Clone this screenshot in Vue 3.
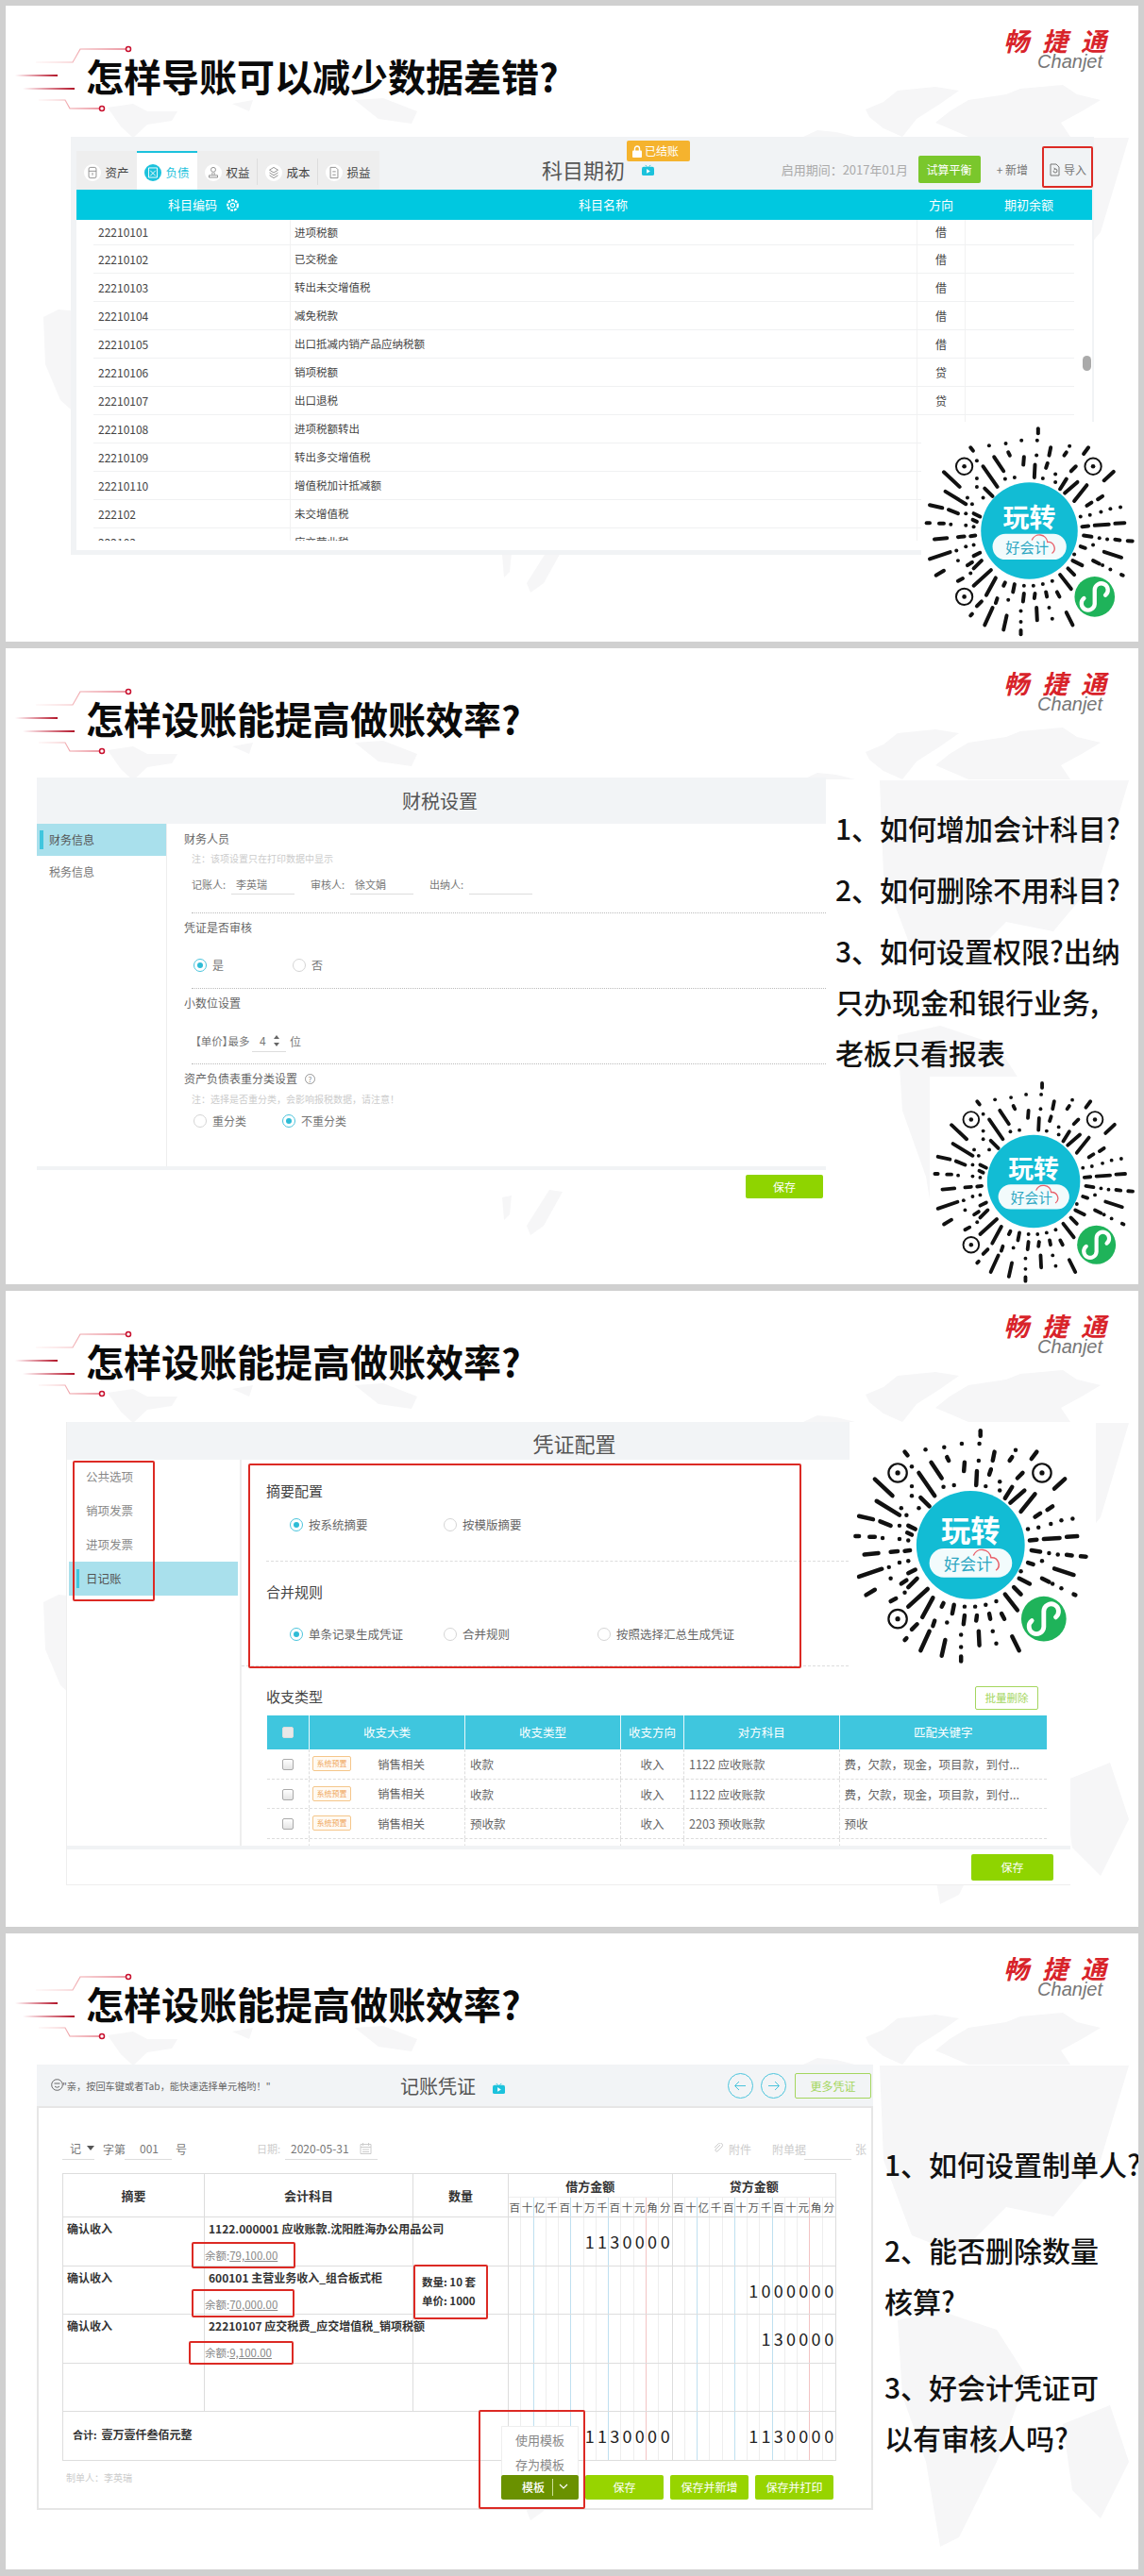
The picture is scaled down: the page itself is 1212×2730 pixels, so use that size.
<script setup>
const mapBlobs = [
  'M911 110 L930 102 L945 90 L985 86 L1010 90 L990 104 L965 120 L950 139 L930 130 L915 118 Z',
  'M985 124 L1000 112 L1020 100 L1060 94 L1075 88 L1120 84 L1135 94 L1160 100 L1140 112 L1118 124 L1128 139 L1020 139 Z',
  'M845 139 L860 132 L880 134 L900 139 Z',
  'M108 108 L135 104 L150 112 L182 112 L176 122 L150 126 L135 140 L122 128 Z',
  'M370 100 L400 98 L436 112 L430 125 L395 120 Z',
  'M240 104 L262 100 L258 112 Z',
  'M40 330 L56 322 L76 324 L78 436 L58 418 L42 380 Z',
  'M926 140 L1190 140 L1160 240 L1110 300 L1060 290 L1010 340 L960 320 L930 240 Z',
  'M945 410 L990 400 L1050 420 L1082 470 L1050 560 L1010 640 L990 650 L975 560 L950 490 Z',
  'M1120 520 L1170 500 L1190 560 L1160 620 L1130 590 Z',
  'M526 582 L536 580 L534 600 L528 606 Z',
  'M552 612 L576 574 L590 576 L570 612 L556 622 Z'
]

const finders = [[185, 190], [595, 190], [185, 605]]
const dashes = [
  [420,70,420,85],[417,107,417,107],[367,107,367,107],[317,117,317,117],[264,124,264,124],[205,130,213,140],[520,125,520,125],[460,130,455,155],[510,145,503,155],[580,130,565,150],
  [375,160,373,185],[325,145,330,155],[280,160,310,205],[245,190,290,255],[225,172,225,172],[120,208,170,255],[225,228,225,228],[415,155,415,155],[410,185,408,225],[450,180,445,195],
  [475,215,475,215],[345,225,345,225],[315,230,315,230],[435,228,435,228],[475,240,475,240],[540,190,525,205],[510,230,490,262],[660,207,630,235],[545,240,505,275],[575,250,535,300],
  [125,270,190,310],[250,260,275,285],[225,255,225,255],[195,290,195,290],[245,290,245,290],[75,313,115,322],[135,328,165,340],[210,310,210,310],[215,340,235,350],[190,340,190,340],
  [625,285,610,295],[590,305,575,315],[682,320,682,320],[650,325,650,325],[620,335,620,335],[585,345,585,345],[555,350,555,350],[65,370,75,370],[105,372,120,372],[142,375,142,375],
  [190,378,190,378],[215,382,215,382],[212,360,225,366],[560,382,580,380],[600,378,645,375],[665,372,695,370],[90,422,130,418],[165,415,185,413],[205,412,220,410],[565,410,590,414],
  [615,418,615,418],[640,422,640,422],[665,423,680,425],[705,427,720,428],[75,485,140,463],[160,458,160,458],[215,440,215,440],[190,445,190,445],[555,445,570,450],[630,462,685,480],
  [595,440,595,440],[535,470,535,470],[95,537,120,522],[165,490,165,490],[215,475,235,465],[195,505,210,495],[240,490,215,515],[530,490,560,505],[595,490,615,500],[650,518,650,518],
  [625,505,625,505],[685,535,690,537],[165,555,180,547],[205,530,205,530],[270,520,215,570],[515,515,535,535],[490,535,525,580],[285,545,255,600],[315,560,310,570],[345,565,340,590],
  [375,570,375,570],[405,570,405,570],[435,565,435,565],[465,555,465,555],[375,595,372,620],[410,595,408,610],[445,590,448,605],[480,590,488,605],[290,610,285,625],[325,615,325,615],
  [240,620,225,635],[210,660,205,665],[275,640,250,695],[320,665,310,710],[365,650,365,650],[365,685,365,685],[365,712,365,725],[415,640,417,680],[455,640,455,640],[465,675,465,675],[510,655,530,695]
]

const tabs = [
  { name: '资产', glyph: 'M4.500 4.500a1.500 1.500 0 0 1 1.500-1.500h4a1.500 1.500 0 0 1 1.500 1.500v7a1.500 1.500 0 0 1-1.500 1.500h-4a1.500 1.500 0 0 1-1.500-1.500z M4.500 6.500h7 M8 8v2.500' },
  { name: '负债', glyph: 'M4 3.500h8v9H4z M5.500 6l5 5 M10.500 6l-5 5', active: true },
  { name: '权益', glyph: 'M8 3a2.200 2.200 0 1 1 0 4.400a2.200 2.200 0 1 1 0-4.400 M7 8v2 M9 8v2 M4 10.500h8v2H4z' },
  { name: '成本', glyph: 'M8 3l4 2.500l-4 2.500l-4-2.500z M4 8l4 2.500l4-2.500 M4 10.500l4 2.500l4-2.500' },
  { name: '损益', glyph: 'M4.500 3h5l2 2v8h-7z M6.500 7h3 M6.500 10h3' }
]

const subjects = [
  ['22210101', '进项税额', '借'],
  ['22210102', '已交税金', '借'],
  ['22210103', '转出未交增值税', '借'],
  ['22210104', '减免税款', '借'],
  ['22210105', '出口抵减内销产品应纳税额', '借'],
  ['22210106', '销项税额', '贷'],
  ['22210107', '出口退税', '贷'],
  ['22210108', '进项税额转出', '贷'],
  ['22210109', '转出多交增值税', '贷'],
  ['22210110', '增值税加计抵减额', '贷'],
  ['222102', '未交增值税', '贷'],
  ['222103', '应交营业税', '贷']
]

const keywords = '费\uFF0C欠款\uFF0C现金\uFF0C项目款\uFF0C到付...'
const incomeRows = [
  ['销售相关', '收款', '收入', '1122 应收账款', keywords],
  ['销售相关', '收款', '收入', '1122 应收账款', keywords],
  ['销售相关', '预收款', '收入', '2203 预收账款', '预收'],
  ['', '', '', '', '']
]

const units = '百十亿千百十万千百十元角分'.split('')

function cells(num) {
  return num.padStart(13, ' ').split('')
}

function lineClass(i) {
  if (i === 1 || i === 4 || i === 7) return 'blue'
  if (i === 10) return 'red'
  return ''
}

const vouchers = [
  { sum: '确认收入', acct: '1122.000001 应收账款.沈阳胜海办公用品公司', bal: '79,100.00', debit: '1130000', credit: '' },
  { sum: '确认收入', acct: '600101 主营业务收入_组合板式柜', bal: '70,000.00', debit: '', credit: '1000000', qty: true },
  { sum: '确认收入', acct: '22210107 应交税费_应交增值税_销项税额', bal: '9,100.00', debit: '', credit: '130000' },
  { sum: '', acct: '', bal: '', debit: '', credit: '' }
]
</script>

<template>
  <div class="page">
    <!-- 第一页 -->
    <section class="slide">
      <svg class="map" viewBox="0 0 1200 674"><path v-for="(d, i) in mapBlobs" :key="i" :d="d" /></svg>
      <svg class="deco" viewBox="0 0 140 80">
        <defs>
          <linearGradient id="fade1"><stop offset="0" stop-color="#c8102e" stop-opacity="0" /><stop offset="1" stop-color="#b01428" /></linearGradient>
          <linearGradient id="fade2"><stop offset="0" stop-color="#e88" stop-opacity="0.1" /><stop offset="1" stop-color="#d9364a" /></linearGradient>
        </defs>
        <path d="M32 20H71L79 6H127" fill="none" stroke="url(#fade2)" stroke-width="1.2" />
        <circle cx="130" cy="6" r="2.5" fill="#fff" stroke="#c8102e" stroke-width="1.5" />
        <rect x="10" y="33" width="45" height="2" fill="url(#fade1)" />
        <rect x="18" y="47" width="55" height="2" fill="url(#fade1)" />
        <path d="M35 60H63L68 69H99" fill="none" stroke="url(#fade2)" stroke-width="1.2" />
        <circle cx="102" cy="69" r="2.5" fill="#fff" stroke="#c8102e" stroke-width="1.5" />
      </svg>
      <header class="head">
        <h1>怎样导账可以减少数据差错?</h1>
        <div class="logo"><b>畅捷通</b><i>Chanjet</i></div>
      </header>

      <div class="panel p1">
        <div class="p1-top">
          <div class="tabs">
            <div v-for="t in tabs" :key="t.name" class="tab" :class="{ on: t.active }">
              <svg class="tab-ico" viewBox="0 0 16 16"><circle cx="8" cy="8" r="8" /><path :d="t.glyph" /></svg>
              {{ t.name }}
            </div>
          </div>
          <div class="p1-title">
            科目期初
            <span class="closed">
              <svg width="10" height="13" viewBox="0 0 10 13"><path d="M2.500 6V3.500a2.500 2.500 0 0 1 5 0V6" fill="none" stroke="#fff" stroke-width="1.400" /><rect y="5.500" width="10" height="7.500" rx="1" fill="#fff" /></svg>
              已结账
            </span>
            <svg class="tv" viewBox="0 0 14 12"><rect y="2" width="14" height="10" rx="2" /><path d="M4 0l2 2M10 0l-2 2" stroke="#1cc2dc" /><path d="M5.500 4.500l4 2.500l-4 2.500z" fill="#fff" /></svg>
          </div>
          <div class="p1-right">
            <span class="period">启用期间&#xFF1A;2017年01月</span>
            <span class="try">试算平衡</span>
            <span class="lnk add">+ 新增</span>
            <span class="lnk imp">
              <svg width="11" height="14" viewBox="0 0 11 14"><path d="M1 1h6l3 3v9H1z M4 8a2 2 0 1 0 2-2 M6 6l-1.500-1M6 6l-1.500 1" fill="none" stroke="#777" /></svg>
              导入
            </span>
          </div>
          <div class="redbox p1-red"></div>
        </div>
        <div class="p1-thead">
          <div class="code-h">科目编码
            <svg width="15" height="15" viewBox="0 0 14 14"><circle cx="7" cy="7" r="5" fill="none" stroke="#fff" stroke-width="2" stroke-dasharray="2.600 1" /><circle cx="7" cy="7" r="2" fill="none" stroke="#fff" /></svg>
          </div>
          <div>科目名称</div>
          <div>方向</div>
          <div>期初余额</div>
        </div>
        <div class="p1-body">
          <div class="p1-rows">
            <div v-for="r in subjects" :key="r[0]" class="p1-row">
              <div>{{ r[0] }}</div>
              <div class="nm">{{ r[1] }}</div>
              <div class="dir">{{ r[2] }}</div>
              <div></div>
            </div>
          </div>
          <div class="thumb"></div>
        </div>
      </div>

      <svg class="qr qr1" viewBox="48 48 700 700">
        <rect x="48" y="48" width="700" height="700" fill="#fff" />
        <g fill="none" stroke="#111">
          <line v-for="(q, i) in dashes" :key="i" :x1="q[0]" :y1="q[1]" :x2="q[2]" :y2="q[3]" stroke-width="12" stroke-linecap="round" />
          <g v-for="(f, i) in finders" :key="i">
            <circle :cx="f[0]" :cy="f[1]" r="26" stroke-width="6" />
            <circle :cx="f[0]" :cy="f[1]" r="7" fill="#111" stroke="none" />
          </g>
        </g>
        <circle cx="392" cy="395" r="154" fill="#12bcd4" />
        <text x="392" y="385" text-anchor="middle" class="qr-big">玩转</text>
        <rect x="275" y="405" width="235" height="82" rx="41" fill="#f2fbfc" />
        <text x="385" y="466" text-anchor="middle" class="qr-small">好会计</text>
        <path d="M400 425a26 26 0 0 1 50 6a20 20 0 0 1 14 36" fill="none" stroke="#e8606a" stroke-width="4" />
        <circle cx="600" cy="605" r="64" fill="#1fb35a" />
        <path d="M566 610A21 21 0 1 0 600 628L600 583A21 21 0 1 1 634 600" fill="none" stroke="#fff" stroke-width="13" stroke-linecap="round" />
      </svg>
    </section>

    <!-- 第二页 -->
    <section class="slide">
      <svg class="map" viewBox="0 0 1200 674"><path v-for="(d, i) in mapBlobs" :key="i" :d="d" /></svg>
      <svg class="deco" viewBox="0 0 140 80">
        <path d="M32 20H71L79 6H127" fill="none" stroke="url(#fade2)" stroke-width="1.2" />
        <circle cx="130" cy="6" r="2.5" fill="#fff" stroke="#c8102e" stroke-width="1.5" />
        <rect x="10" y="33" width="45" height="2" fill="url(#fade1)" />
        <rect x="18" y="47" width="55" height="2" fill="url(#fade1)" />
        <path d="M35 60H63L68 69H99" fill="none" stroke="url(#fade2)" stroke-width="1.2" />
        <circle cx="102" cy="69" r="2.5" fill="#fff" stroke="#c8102e" stroke-width="1.5" />
      </svg>
      <header class="head">
        <h1>怎样设账能提高做账效率?</h1>
        <div class="logo"><b>畅捷通</b><i>Chanjet</i></div>
      </header>

      <div class="body b2">
        <div class="panel p2">
          <div class="ptitle p2-head">财税设置</div>
          <div class="p2-main">
            <div class="p2-side">
              <div class="side-item on"><span class="bar"></span>财务信息</div>
              <div class="side-item">税务信息</div>
            </div>
            <div class="p2-form">
              <div class="sec s-a">
                <div class="st">财务人员</div>
                <div class="note">注&#xFF1A;该项设置只在打印数据中显示</div>
                <div class="people">
                  <span class="pl">记账人:</span><span class="pv">李英瑞</span>
                  <span class="pl">审核人:</span><span class="pv">徐文娟</span>
                  <span class="pl">出纳人:</span><span class="pv"></span>
                </div>
              </div>
              <div class="sec s-b">
                <div class="st">凭证是否审核</div>
                <div class="opts">
                  <label class="opt w105"><i class="radio on"></i>是</label>
                  <label class="opt"><i class="radio"></i>否</label>
                </div>
              </div>
              <div class="sec s-b">
                <div class="st">小数位设置</div>
                <div class="digits-row">
                  <span class="price">【单价】最多</span>
                  <span class="num">4<span class="spin"><em></em><em></em></span></span>
                  <span>位</span>
                </div>
              </div>
              <div class="sec s-c">
                <div class="st">资产负债表重分类设置 <span class="help">?</span></div>
                <div class="note">注&#xFF1A;选择是否重分类&#xFF0C;会影响报税数据&#xFF0C;请注意&#xFF01;</div>
                <div class="opts o2">
                  <label class="opt w94"><i class="radio"></i>重分类</label>
                  <label class="opt"><i class="radio on"></i>不重分类</label>
                </div>
              </div>
            </div>
          </div>
          <div class="foot-bar"></div>
          <div class="p2-foot"><span class="save s2">保存</span></div>
        </div>
        <div class="side s2-text">
          <p>1、如何增加会计科目?</p>
          <p>2、如何删除不用科目?</p>
          <p>3、如何设置权限?出纳<br />只办现金和银行业务,<br />老板只看报表</p>
        </div>
      </div>

      <svg class="qr qr2" viewBox="48 48 700 700">
        <rect x="48" y="48" width="700" height="700" fill="#fff" />
        <g fill="none" stroke="#111">
          <line v-for="(q, i) in dashes" :key="i" :x1="q[0]" :y1="q[1]" :x2="q[2]" :y2="q[3]" stroke-width="12" stroke-linecap="round" />
          <g v-for="(f, i) in finders" :key="i">
            <circle :cx="f[0]" :cy="f[1]" r="26" stroke-width="6" />
            <circle :cx="f[0]" :cy="f[1]" r="7" fill="#111" stroke="none" />
          </g>
        </g>
        <circle cx="392" cy="395" r="154" fill="#12bcd4" />
        <text x="392" y="385" text-anchor="middle" class="qr-big">玩转</text>
        <rect x="275" y="405" width="235" height="82" rx="41" fill="#f2fbfc" />
        <text x="385" y="466" text-anchor="middle" class="qr-small">好会计</text>
        <path d="M400 425a26 26 0 0 1 50 6a20 20 0 0 1 14 36" fill="none" stroke="#e8606a" stroke-width="4" />
        <circle cx="600" cy="605" r="64" fill="#1fb35a" />
        <path d="M566 610A21 21 0 1 0 600 628L600 583A21 21 0 1 1 634 600" fill="none" stroke="#fff" stroke-width="13" stroke-linecap="round" />
      </svg>
    </section>

    <!-- 第三页 -->
    <section class="slide">
      <svg class="map" viewBox="0 0 1200 674"><path v-for="(d, i) in mapBlobs" :key="i" :d="d" /></svg>
      <svg class="deco" viewBox="0 0 140 80">
        <path d="M32 20H71L79 6H127" fill="none" stroke="url(#fade2)" stroke-width="1.2" />
        <circle cx="130" cy="6" r="2.5" fill="#fff" stroke="#c8102e" stroke-width="1.5" />
        <rect x="10" y="33" width="45" height="2" fill="url(#fade1)" />
        <rect x="18" y="47" width="55" height="2" fill="url(#fade1)" />
        <path d="M35 60H63L68 69H99" fill="none" stroke="url(#fade2)" stroke-width="1.2" />
        <circle cx="102" cy="69" r="2.5" fill="#fff" stroke="#c8102e" stroke-width="1.5" />
      </svg>
      <header class="head">
        <h1>怎样设账能提高做账效率?</h1>
        <div class="logo"><b>畅捷通</b><i>Chanjet</i></div>
      </header>

      <div class="panel p3">
        <div class="ptitle p3-head">凭证配置</div>
        <div class="p3-main">
          <div class="p3-side">
            <div class="side3">公共选项</div>
            <div class="side3">销项发票</div>
            <div class="side3">进项发票</div>
            <div class="side3 on"><span class="bar"></span>日记账</div>
            <div class="redbox p3-red1"></div>
          </div>
          <div class="p3-form">
            <div class="redbox p3-red2"></div>
            <div class="sec3 a">
              <div class="st3">摘要配置</div>
              <div class="opts3">
                <label class="opt w163"><i class="radio on"></i>按系统摘要</label>
                <label class="opt w163"><i class="radio"></i>按模版摘要</label>
              </div>
            </div>
            <div class="sec3 b">
              <div class="st3">合并规则</div>
              <div class="opts3">
                <label class="opt w163"><i class="radio on"></i>单条记录生成凭证</label>
                <label class="opt w163"><i class="radio"></i>合并规则</label>
                <label class="opt"><i class="radio"></i>按照选择汇总生成凭证</label>
              </div>
            </div>
            <div class="type-head">
              <div class="st3">收支类型</div>
              <span class="batch">批量删除</span>
            </div>
            <div class="itable">
              <div class="irow ihead">
                <div><i class="check dark"></i></div>
                <div>收支大类</div>
                <div>收支类型</div>
                <div>收支方向</div>
                <div>对方科目</div>
                <div>匹配关键字</div>
              </div>
              <div v-for="(r, i) in incomeRows" :key="i" class="irow">
                <div class="c"><i class="check"></i></div>
                <div class="cat"><span class="preset">系统预置</span>{{ r[0] }}</div>
                <div>{{ r[1] }}</div>
                <div class="c">{{ r[2] }}</div>
                <div>{{ r[3] }}</div>
                <div>{{ r[4] }}</div>
              </div>
            </div>
          </div>
        </div>
        <div class="foot-bar"></div>
        <div class="p3-foot"><span class="save s3">保存</span></div>
      </div>

      <svg class="qr qr3" viewBox="48 48 700 700">
        <rect x="48" y="48" width="700" height="700" fill="#fff" />
        <g fill="none" stroke="#111">
          <line v-for="(q, i) in dashes" :key="i" :x1="q[0]" :y1="q[1]" :x2="q[2]" :y2="q[3]" stroke-width="12" stroke-linecap="round" />
          <g v-for="(f, i) in finders" :key="i">
            <circle :cx="f[0]" :cy="f[1]" r="26" stroke-width="6" />
            <circle :cx="f[0]" :cy="f[1]" r="7" fill="#111" stroke="none" />
          </g>
        </g>
        <circle cx="392" cy="395" r="154" fill="#12bcd4" />
        <text x="392" y="385" text-anchor="middle" class="qr-big">玩转</text>
        <rect x="275" y="405" width="235" height="82" rx="41" fill="#f2fbfc" />
        <text x="385" y="466" text-anchor="middle" class="qr-small">好会计</text>
        <path d="M400 425a26 26 0 0 1 50 6a20 20 0 0 1 14 36" fill="none" stroke="#e8606a" stroke-width="4" />
        <circle cx="600" cy="605" r="64" fill="#1fb35a" />
        <path d="M566 610A21 21 0 1 0 600 628L600 583A21 21 0 1 1 634 600" fill="none" stroke="#fff" stroke-width="13" stroke-linecap="round" />
      </svg>
    </section>

    <!-- 第四页 -->
    <section class="slide">
      <svg class="map" viewBox="0 0 1200 674"><path v-for="(d, i) in mapBlobs" :key="i" :d="d" /></svg>
      <svg class="deco" viewBox="0 0 140 80">
        <path d="M32 20H71L79 6H127" fill="none" stroke="url(#fade2)" stroke-width="1.2" />
        <circle cx="130" cy="6" r="2.5" fill="#fff" stroke="#c8102e" stroke-width="1.5" />
        <rect x="10" y="33" width="45" height="2" fill="url(#fade1)" />
        <rect x="18" y="47" width="55" height="2" fill="url(#fade1)" />
        <path d="M35 60H63L68 69H99" fill="none" stroke="url(#fade2)" stroke-width="1.2" />
        <circle cx="102" cy="69" r="2.5" fill="#fff" stroke="#c8102e" stroke-width="1.5" />
      </svg>
      <header class="head">
        <h1>怎样设账能提高做账效率?</h1>
        <div class="logo"><b>畅捷通</b><i>Chanjet</i></div>
      </header>

      <div class="body b4">
        <div class="panel p4">
          <div class="p4-head">
            <svg class="smile" width="13" height="13" viewBox="0 0 13 13"><circle cx="6.500" cy="6.500" r="5.800" fill="none" stroke="#666" /><path d="M3.500 5h6M4 8c1.500 1.500 3.500 1.500 5 0" fill="none" stroke="#666" /></svg>
            <span class="tip">"亲&#xFF0C;按回车键或者Tab&#xFF0C;能快速选择单元格哟&#xFF01;"</span>
            <span class="p4-title">记账凭证</span>
            <svg class="tv t4" viewBox="0 0 14 12"><rect y="2" width="14" height="10" rx="2" /><path d="M4 0l2 2M10 0l-2 2" stroke="#1cc2dc" /><path d="M5.500 4.500l4 2.500l-4 2.500z" fill="#fff" /></svg>
            <span class="nav"><svg viewBox="0 0 27 27"><circle cx="13.500" cy="13.500" r="13" /><path d="M19 13.500H8M12 9l-4.500 4.500L12 18" /></svg></span>
            <span class="nav n2"><svg viewBox="0 0 27 27"><circle cx="13.500" cy="13.500" r="13" /><path d="M8 13.500H19M15 9l4.500 4.500L15 18" /></svg></span>
            <span class="more">更多凭证</span>
          </div>
          <div class="p4-body">
            <div class="vform">
              <span class="ul u1">记<i class="caret"></i></span>
              <span class="lbl l1">字第</span>
              <span class="ul u2">001</span>
              <span class="lbl l2">号</span>
              <span class="lbl l3">日期:</span>
              <span class="ul u3">2020-05-31
                <svg width="13" height="13" viewBox="0 0 13 13"><path d="M1 2.500h11v10H1z M1 5.500h11 M3.500 1v3M9.500 1v3 M3 8h7M3 10.500h7" fill="none" stroke="#ccc" /></svg>
              </span>
              <span class="vright">
                <svg width="12" height="12" viewBox="0 0 12 12"><path d="M8 2L3 7a1.500 1.500 0 0 0 2 2l5-5a2.500 2.500 0 0 0-3.500-3.500L2 5" fill="none" stroke="#ccc" /></svg>
                <span class="lbl l4">附件</span>
                <span class="lbl l5">附单据</span>
                <span class="ul u4"></span>
                <span class="lbl l6">张</span>
              </span>
            </div>
            <div class="vtable">
              <div class="vrow vhead">
                <div class="vc">摘要</div>
                <div class="vc">会计科目</div>
                <div class="vc">数量</div>
                <div class="amh">
                  <div class="amt-t">借方金额</div>
                  <div class="amt-u"><span v-for="(u, i) in units" :key="i" :class="lineClass(i)">{{ u }}</span></div>
                </div>
                <div class="amh">
                  <div class="amt-t">贷方金额</div>
                  <div class="amt-u"><span v-for="(u, i) in units" :key="i" :class="lineClass(i)">{{ u }}</span></div>
                </div>
              </div>
              <div v-for="(v, n) in vouchers" :key="n" class="vrow">
                <div class="vt">{{ v.sum }}</div>
                <div class="vt acct">
                  <div>{{ v.acct }}</div>
                  <div v-if="v.bal" class="bal">余额:<u>{{ v.bal }}</u></div>
                </div>
                <div class="vt qty">
                  <template v-if="v.qty">
                    <div>数量: 10 套</div>
                    <div>单价: 1000</div>
                  </template>
                </div>
                <div class="amt"><span v-for="(c, i) in cells(v.debit)" :key="i" :class="lineClass(i)">{{ c }}</span></div>
                <div class="amt"><span v-for="(c, i) in cells(v.credit)" :key="i" :class="lineClass(i)">{{ c }}</span></div>
              </div>
              <div class="vrow vsum">
                <div class="total"><span class="tl">合计:</span>壹万壹仟叁佰元整</div>
                <div class="amt"><span v-for="(c, i) in cells('1130000')" :key="i" :class="lineClass(i)">{{ c }}</span></div>
                <div class="amt"><span v-for="(c, i) in cells('1130000')" :key="i" :class="lineClass(i)">{{ c }}</span></div>
              </div>
              <div class="redbox r1"></div>
              <div class="redbox r2"></div>
              <div class="redbox r3"></div>
              <div class="redbox r4"></div>
              <div class="redbox r5"></div>
            </div>
            <div class="vfoot">
              <span class="maker">制单人&#xFF1A;李英瑞</span>
              <div class="tpl">
                <div class="tpl-menu"><div>使用模板</div><div>存为模板</div></div>
                <span class="tpl-name">模板</span>
                <svg width="10" height="7" viewBox="0 0 10 7"><path d="M1 1l4 4l4-4" fill="none" stroke="#fff" stroke-width="1.200" /></svg>
              </div>
              <span class="gbtn">保存</span>
              <span class="gbtn">保存并新增</span>
              <span class="gbtn">保存并打印</span>
            </div>
          </div>
        </div>
        <div class="side s4-text">
          <p>1、如何设置制单人?</p>
          <p>2、能否删除数量<br />核算?</p>
          <p>3、好会计凭证可<br />以有审核人吗?</p>
        </div>
      </div>
    </section>
  </div>
</template>

<style>
html, body {
  margin: 0;
  background: #d0d0d0;
}
</style>

<style scoped>
* {
  box-sizing: border-box;
}

.page {
  width: 1212px;
  padding: 6px 6px 0;
  font-family: "Noto Sans CJK SC", "Noto Sans", sans-serif;
  color: #555;
  font-size: 12px;
}

.slide {
  position: relative;
  height: 674px;
  margin-bottom: 7px;
  background: #fff;
  overflow: hidden;
}

.map {
  position: absolute;
  left: 0;
  top: 0;
  width: 1200px;
  height: 674px;
}

.map path {
  fill: #f6f6f7;
}

.deco {
  position: absolute;
  left: 0;
  top: 40px;
  width: 140px;
  height: 80px;
}

.head {
  position: relative;
  display: flex;
  justify-content: space-between;
  height: 139px;
  padding: 46px 32px 0 85px;
}

.head h1 {
  margin: 0;
  font-size: 40px;
  line-height: 56px;
  font-weight: 700;
  color: #0a0a0a;
  white-space: nowrap;
}

.logo {
  display: flex;
  flex-direction: column;
  align-items: flex-end;
  margin-top: -22px;
}

.logo b {
  font-size: 27px;
  line-height: 26px;
  letter-spacing: 14px;
  margin-right: -12px;
  color: #d8232a;
  font-style: italic;
}

.logo i {
  font-family: "Liberation Sans", sans-serif;
  font-size: 20px;
  line-height: 16px;
  color: #777;
  margin: 1px 6px 0 0;
}

.panel {
  position: relative;
}

.body {
  position: relative;
  display: flex;
  align-items: flex-start;
}

.side {
  flex: none;
  color: #111;
  font-size: 30px;
  line-height: 54px;
  font-weight: 500;
  white-space: nowrap;
}

.side p {
  margin: 0 0 11px;
}

.redbox {
  position: absolute;
  border: 2px solid #dc2a24;
  border-radius: 2px;
  pointer-events: none;
}

.ptitle {
  text-align: center;
  color: #555;
  background: #f2f4f6;
}

.tv {
  width: 13px;
  height: 13px;
  fill: #1cc2dc;
}

.qr {
  position: absolute;
}

.qr1 {
  left: 970px;
  top: 441px;
  width: 233px;
  height: 233px;
}

.qr2 {
  left: 979px;
  top: 454px;
  width: 224px;
  height: 224px;
}

.qr3 {
  left: 894px;
  top: 140px;
  width: 261px;
  height: 261px;
}

.qr-big {
  font-size: 84px;
  font-weight: 700;
  fill: #fff;
}

.qr-small {
  font-size: 46px;
  fill: #2fa7c2;
}

/* 第一页 */
.p1 {
  width: 1084px;
  height: 443px;
  margin-left: 69px;
  padding: 0 2px 5px 6px;
  background: #f1f3f5;
}

.p1-top {
  position: relative;
  display: flex;
  height: 56px;
}

.tabs {
  display: flex;
  width: 321px;
  height: 41px;
  margin-top: 15px;
  background: #eee;
}

.tab {
  position: relative;
  display: flex;
  align-items: center;
  justify-content: center;
  gap: 4px;
  width: 64px;
  padding-top: 2px;
  font-size: 12.500px;
  color: #444;
  border-top: 2px solid transparent;
}

.tab.on {
  background: #fff;
  color: #1cc2dc;
  border-top-color: #1cc2dc;
}

.tab:nth-child(3)::after,
.tab:nth-child(4)::after {
  content: "";
  position: absolute;
  right: 0;
  top: 6px;
  height: 28px;
  border-right: 1px solid #ddd;
}

.tab-ico {
  flex: none;
  width: 18px;
  height: 18px;
  fill: none;
}

.tab-ico circle {
  fill: #fff;
}

.tab-ico path {
  stroke: #888;
  stroke-width: 0.800;
}

.tab.on .tab-ico circle {
  fill: #1cc2dc;
}

.tab.on .tab-ico path {
  stroke: #fff;
}

.p1-title {
  position: relative;
  margin: 17px 0 0 172px;
  width: 100px;
  font-size: 22px;
  line-height: 34px;
  color: #555;
  white-space: nowrap;
}

.p1-title .tv {
  position: absolute;
  left: 106px;
  top: 12px;
}

.closed {
  position: absolute;
  left: 90px;
  top: -13px;
  display: flex;
  align-items: center;
  gap: 3px;
  width: 67px;
  height: 22px;
  padding-left: 6px;
  background: #f5b32e;
  border-radius: 2px;
  color: #fff;
  font-size: 12px;
  line-height: 22px;
}

.p1-right {
  display: flex;
  align-items: center;
  margin-left: auto;
  height: 29px;
  margin-top: 20px;
  padding-right: 6px;
  white-space: nowrap;
}

.period {
  width: 145px;
  font-size: 13px;
  color: #aaa;
}

.try {
  width: 66px;
  height: 29px;
  line-height: 29px;
  text-align: center;
  background: #7ac72c;
  color: #fff;
  border-radius: 2px;
}

.lnk {
  display: flex;
  align-items: center;
  gap: 4px;
  color: #777;
}

.add {
  margin-left: 17px;
}

.imp {
  margin-left: 23px;
}

.p1-red {
  right: -1px;
  top: 10px;
  width: 54px;
  height: 44px;
}

.p1-thead {
  display: grid;
  grid-template-columns: 226px 664px 52px 134px;
  height: 32px;
  line-height: 32px;
  background: #00c8e0;
  color: #fff;
  font-size: 13px;
  text-align: center;
}

.code-h {
  display: flex;
  align-items: center;
  justify-content: center;
  gap: 9px;
  padding-left: 44px;
}

.p1-body {
  position: relative;
  height: 350px;
  background: #fff;
}

.p1-rows {
  height: 340px;
  overflow: hidden;
  padding: 0 19px 0 18px;
  margin-top: 0;
}

.p1-row {
  display: grid;
  grid-template-columns: 208px 664px 52px 115px;
  height: 30px;
  border-bottom: 1px solid #f0f1f2;
  color: #444;
  line-height: 29px;
}

.p1-row:first-child {
  height: 27px;
  line-height: 26px;
}

.p1-row > div {
  padding-left: 5px;
}

.p1-row .nm {
  padding-left: 4px;
  border-left: 1px solid #f2f2f2;
  font-size: 11.500px;
}

.p1-row .dir {
  padding: 0;
  text-align: center;
  border-left: 1px solid #f2f2f2;
  border-right: 1px solid #f2f2f2;
}

.thumb {
  position: absolute;
  left: 1066px;
  top: 144px;
  width: 9px;
  height: 16px;
  border-radius: 5px;
  background: #aaa;
}

/* 第二页 */
.b2 {
  margin-top: -2px;
  padding-left: 33px;
}

.p2 {
  width: 836px;
  height: 446px;
  flex: none;
}

.p2-head {
  height: 49px;
  line-height: 50px;
  font-size: 20px;
  padding-left: 18px;
}

.p2-main {
  display: flex;
  height: 363px;
  background: #fff;
}

.p2-side {
  width: 138px;
  flex: none;
  border-right: 1px solid #eee;
}

.side-item {
  position: relative;
  height: 34px;
  line-height: 34px;
  padding-left: 13px;
  color: #777;
  font-size: 12px;
}

.side-item.on {
  background: #a9e0ec;
  color: #555;
}

.bar {
  position: absolute;
  left: 3px;
  top: 7px;
  width: 4px;
  height: 20px;
  background: #3fc6de;
}

.p2-form {
  flex: 1;
  padding-left: 18px;
}

.sec {
  position: relative;
  padding-top: 6px;
}

.sec::after {
  content: "";
  position: absolute;
  left: 8px;
  right: 0;
  bottom: 0;
  border-top: 1px dotted #bbb;
}

.s-a {
  height: 95px;
}

.s-b {
  height: 80px;
  padding-top: 5px;
}

.s-c {
  height: 90px;
  padding-top: 5px;
}

.s-c::after {
  display: none;
}

.st {
  display: flex;
  align-items: center;
  gap: 6px;
  height: 20px;
  line-height: 20px;
  color: #666;
}

.help {
  width: 11px;
  height: 11px;
  margin-left: 2px;
  border: 1px solid #999;
  border-radius: 50%;
  font-size: 8px;
  line-height: 9px;
  text-align: center;
  color: #888;
}

.note {
  height: 20px;
  line-height: 20px;
  margin: 1px 0 0 8px;
  font-size: 10px;
  color: #ccc;
}

.s-c .note {
  margin-top: 2px;
}

.people {
  display: flex;
  align-items: center;
  height: 22px;
  margin: 6px 0 0 8px;
  color: #777;
  font-size: 11px;
}

.pl {
  width: 42px;
}

.pv {
  width: 67px;
  height: 22px;
  line-height: 22px;
  padding-left: 5px;
  margin-right: 17px;
  border-bottom: 1px solid #ddd;
}

.opts {
  display: flex;
  height: 20px;
  margin: 20px 0 0 10px;
}

.opts.o2 {
  margin-top: 3px;
}

.opt {
  display: flex;
  align-items: center;
  gap: 6px;
  line-height: 20px;
  color: #777;
}

.w105 {
  width: 105px;
}

.w94 {
  width: 94px;
}

.w163 {
  width: 163px;
}

.radio {
  position: relative;
  flex: none;
  width: 14px;
  height: 14px;
  border: 1px solid #d5d5d5;
  border-radius: 50%;
  background: #fff;
}

.radio.on {
  border-color: #4ac4dc;
}

.radio.on::after {
  content: "";
  position: absolute;
  left: 3px;
  top: 3px;
  width: 6px;
  height: 6px;
  border-radius: 50%;
  background: #2fbcd6;
}

.digits-row {
  display: flex;
  align-items: center;
  height: 20px;
  margin: 20px 0 0 12px;
  color: #777;
}

.price {
  font-feature-settings: "palt";
  width: 60px;
  font-size: 11.500px;
  white-space: nowrap;
}

.num {
  position: relative;
  display: flex;
  align-items: center;
  justify-content: space-between;
  width: 36px;
  height: 24px;
  margin: 0 4px 0 0;
  padding: 0 7px 0 8px;
  border-bottom: 1px solid #ddd;
}

.spin {
  display: flex;
  flex-direction: column;
  gap: 4px;
}

.spin em {
  width: 0;
  height: 0;
  border-left: 3px solid transparent;
  border-right: 3px solid transparent;
  border-bottom: 4px solid #666;
}

.spin em + em {
  border-bottom: 0;
  border-top: 4px solid #666;
}

.foot-bar {
  height: 4px;
  background: #f1f3f5;
}

.p2-foot {
  display: flex;
  justify-content: flex-end;
  padding: 5px 3px 0 0;
}

.save {
  height: 25px;
  line-height: 25px;
  width: 82px;
  text-align: center;
  background: #8fd400;
  border-radius: 2px;
  color: #fff;
}

.s2-text {
  margin: 26px 0 0 10px;
}

/* 第三页 */
.p3 {
  width: 1064px;
  height: 491px;
  margin-left: 64px;
  background: #fff;
  border-left: 1px solid #eee;
  border-bottom: 1px solid #eee;
}

.p3-head {
  width: 829px;
  height: 40px;
  line-height: 44px;
  font-size: 22px;
  padding-left: 246px;
  margin-bottom: 0;
}

.p3-main {
  display: flex;
  height: 409px;
}

.p3-side {
  position: relative;
  flex: none;
  width: 185px;
  border-right: 2px solid #eee;
}

.side3 {
  position: relative;
  height: 36px;
  line-height: 36px;
  margin-left: 2px;
  margin-right: 2px;
  padding-left: 18px;
  font-size: 12.500px;
  color: #888;
}

.side3.on {
  background: #a9e0ec;
  color: #555;
}

.side3 .bar {
  left: 8px;
  top: 8px;
  width: 3px;
  height: 20px;
}

.p3-red1 {
  left: 6px;
  top: 1px;
  width: 87px;
  height: 149px;
}

.p3-form {
  position: relative;
  flex: 1;
  overflow: hidden;
}

.p3-red2 {
  left: 7px;
  top: 4px;
  width: 586px;
  height: 217px;
  z-index: 2;
}

.sec3 {
  position: relative;
  padding-left: 26px;
}

.sec3.a {
  height: 108px;
  padding-top: 23px;
}

.sec3.a::after {
  content: "";
  position: absolute;
  left: 26px;
  right: 235px;
  bottom: 0;
  border-top: 1px dashed #ddd;
}

.sec3.b {
  height: 111px;
  padding-top: 22px;
}

.sec3.b::after {
  content: "";
  position: absolute;
  left: 0;
  right: 235px;
  bottom: 0;
  border-top: 1px dashed #ddd;
}

.st3 {
  height: 20px;
  line-height: 20px;
  font-size: 15px;
  color: #444;
}

.opts3 {
  display: flex;
  height: 20px;
  margin: 16px 0 0 25px;
}

.opts3 .opt {
  font-size: 12.500px;
  color: #666;
}

.sec3.b .opts3 {
  margin-top: 25px;
}

.type-head {
  display: flex;
  justify-content: space-between;
  height: 52px;
  padding: 21px 34px 0 26px;
}

.type-head .st3 {
  margin-top: 1px;
}

.batch {
  width: 67px;
  height: 25px;
  line-height: 23px;
  text-align: center;
  border: 1px solid #a4d65e;
  border-radius: 2px;
  color: #a4d65e;
  font-size: 11.500px;
}

.itable {
  width: 826px;
  margin-left: 27px;
}

.irow {
  display: grid;
  grid-template-columns: 45px 165px 165px 67px 164.500px 219.500px;
  height: 31.500px;
  line-height: 31px;
  border-bottom: 1px dashed #ddd;
  font-size: 12.500px;
  color: #666;
}

.irow > div {
  padding-left: 5px;
  border-right: 1px dashed #ddd;
  white-space: nowrap;
  overflow: hidden;
}

.irow > div:last-child {
  border-right: 0;
}

.ihead {
  height: 36px;
  line-height: 36px;
  background: #3fc6de;
  color: #fff;
  text-align: center;
  border-bottom: 0;
}

.ihead > div {
  padding: 0;
  border-right: 1px solid #e9f8fb;
}

.irow .c {
  padding: 0;
  text-align: center;
}

.check {
  display: inline-block;
  width: 12px;
  height: 12px;
  vertical-align: -1px;
  border: 1px solid #aaa;
  border-radius: 2px;
  background: linear-gradient(#fff, #e4e4e4);
}

.check.dark {
  background: #e8e8e8;
  border-color: #ddd;
}

.cat {
  display: flex;
  align-items: center;
}

.irow .cat {
  padding-left: 3px;
}

.preset {
  flex: none;
  width: 41px;
  height: 16px;
  line-height: 14px;
  margin-right: 28px;
  text-align: center;
  border: 1px solid #f5c68a;
  border-radius: 2px;
  font-size: 8px;
  color: #f0a860;
  background: #fffaf3;
}

.p3-foot {
  display: flex;
  justify-content: flex-end;
  padding: 5px 18px 0 0;
}

.s3 {
  width: 87px;
  height: 28px;
  line-height: 28px;
}

/* 第四页 */
.b4 {
  padding-left: 33px;
}

.p4 {
  flex: none;
  width: 886px;
  height: 472px;
}

.p4-head {
  position: relative;
  display: flex;
  align-items: center;
  height: 44px;
  padding-left: 15px;
  background: #f2f4f6;
}

.smile {
  flex: none;
  margin-bottom: 1px;
}

.tip {
  margin-left: -1px;
  padding-left: 0;
  font-size: 10.200px;
  color: #666;
  white-space: nowrap;
}

.p4-title {
  position: absolute;
  left: 385px;
  font-size: 20px;
  color: #555;
}

.t4 {
  position: absolute;
  left: 483px;
  top: 19px;
}

.nav {
  position: absolute;
  left: 732px;
  top: 9px;
  width: 27px;
  height: 27px;
}

.n2 {
  left: 767px;
}

.nav svg {
  width: 27px;
  height: 27px;
  fill: none;
  stroke: #4ac4dc;
}

.more {
  position: absolute;
  left: 803px;
  top: 9px;
  width: 81px;
  height: 27px;
  line-height: 25px;
  text-align: center;
  border: 1px solid #a4d65e;
  color: #a4d65e;
  border-radius: 2px;
}

.p4-body {
  height: 428px;
  padding: 31px 0 0 25px;
  background: #fff;
  border: 2px solid #e6e6e6;
}

.vform {
  display: flex;
  align-items: center;
  height: 24px;
  width: 852px;
  color: #777;
}

.ul {
  display: flex;
  align-items: center;
  height: 24px;
  border-bottom: 1px solid #ddd;
}

.u1 {
  width: 34px;
  padding-left: 8px;
  gap: 6px;
}

.caret {
  border-left: 4px solid transparent;
  border-right: 4px solid transparent;
  border-top: 5px solid #555;
}

.l1 {
  margin: 0 -1px 0 9px;
  width: 24px;
}

.u2 {
  width: 50px;
  padding-left: 16px;
}

.l2 {
  margin-left: 4px;
}

.l3 {
  margin-left: 74px;
  width: 30px;
  color: #ccc;
  white-space: nowrap;
  font-size: 11px;
}

.u3 {
  width: 98px;
  padding-left: 6px;
  justify-content: space-between;
  padding-right: 6px;
}

.vright {
  display: flex;
  align-items: center;
  margin-left: auto;
  color: #ccc;
}

.l4 {
  margin-left: 5px;
}

.l5 {
  margin-left: 22px;
}

.u4 {
  width: 50px;
  margin-left: -2px;
}

.l6 {
  margin-left: 4px;
}

.vtable {
  position: relative;
  width: 820px;
  margin-top: 14px;
  border-top: 1px solid #ddd;
  border-left: 1px solid #ddd;
  color: #333;
}

.vrow {
  display: grid;
  grid-template-columns: 150px 221px 101px 173.500px 173.500px;
  height: 51.500px;
  border-bottom: 1px solid #ddd;
}

.vrow > div {
  border-right: 1px solid #ddd;
}

.vhead {
  height: 46px;
  font-weight: 700;
}

.vc {
  display: flex;
  align-items: center;
  justify-content: center;
  font-size: 13px;
}

.amt-t {
  height: 25px;
  line-height: 25px;
  text-align: center;
  font-size: 13px;
  border-bottom: 1px solid #eee;
}

.amt-u,
.amt {
  display: grid;
  grid-template-columns: repeat(13, 1fr);
}

.amt-u {
  height: 20px;
  line-height: 20px;
  font-size: 11.500px;
  font-weight: 400;
  color: #555;
  text-align: center;
}

.amt {
  height: 100%;
  line-height: 50px;
  font-size: 18px;
  color: #222;
  text-align: center;
}

.amt span,
.amt-u span {
  border-right: 1px solid #eee;
}

.amt span:last-child,
.amt-u span:last-child {
  border-right: 0;
}

.amt span.blue,
.amt-u span.blue {
  border-right-color: #bfe0f0;
}

.amt span.red,
.amt-u span.red {
  border-right-color: #f2c4c4;
}

.vt {
  padding: 3px 4px 0;
  font-weight: 700;
  font-size: 12px;
  line-height: 18px;
  white-space: nowrap;
}

.acct {
  position: relative;
}

.bal {
  position: absolute;
  left: 0;
  top: 31px;
  font-weight: 400;
  color: #888;
  font-size: 11.500px;
}

.qty {
  padding: 6px 0 0 9px;
  line-height: 20px;
  font-size: 11.500px;
}

.vsum {
  grid-template-columns: 472px 173.500px 173.500px;
}

.total {
  padding: 15px 0 0 10px;
  font-weight: 700;
  font-size: 12px;
}

.tl {
  margin-right: 5px;
  font-size: 11px;
}

.r1 {
  left: 136px;
  top: 72px;
  width: 110px;
  height: 28px;
}

.r2 {
  left: 136px;
  top: 122px;
  width: 109px;
  height: 30px;
}

.r3 {
  left: 133px;
  top: 177px;
  width: 111px;
  height: 25px;
}

.r4 {
  left: 371px;
  top: 96px;
  width: 79px;
  height: 58px;
}

.r5 {
  left: 440px;
  top: 250px;
  width: 113px;
  height: 105px;
  z-index: 3;
}

.vfoot {
  display: flex;
  align-items: flex-start;
  width: 817px;
  margin-top: 15px;
  font-size: 12px;
}

.maker {
  margin: 0 auto 0 4px;
  font-size: 10px;
  color: #ccc;
  line-height: 6px;
}

.tpl {
  position: relative;
  display: flex;
  align-items: center;
  width: 82px;
  height: 26px;
  background: #6a9100;
  border-radius: 2px;
  color: #fff;
}

.tpl-name {
  width: 55px;
  padding-left: 22px;
  line-height: 18px;
  border-right: 1px solid #cde09a;
  margin-right: 6px;
  font-weight: 500;
}

.tpl-menu {
  position: absolute;
  left: 0;
  bottom: 26px;
  width: 82px;
  height: 52px;
  padding-top: 1px;
  background: #fff;
  border: 1px solid #eee;
  border-bottom: 0;
  font-size: 13px;
  color: #888;
  text-align: center;
  line-height: 26px;
}

.gbtn {
  width: 83px;
  height: 26px;
  line-height: 26px;
  margin-left: 7px;
  text-align: center;
  background: #97d400;
  border-radius: 2px;
  color: #fff;
}

.s4-text {
  margin: 78px 0 0 12px;
}

.s4-text p {
  margin-bottom: 37px;
}
</style>
